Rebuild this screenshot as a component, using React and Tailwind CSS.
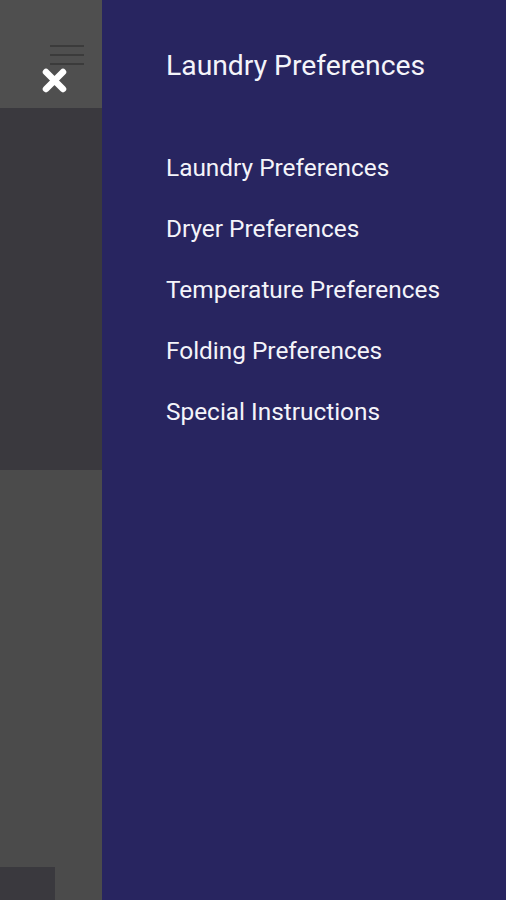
const items = [
  "Laundry Preferences",
  "Dryer Preferences",
  "Temperature Preferences",
  "Folding Preferences",
  "Special Instructions",
];

export default function App() {
  return (
    <div className="flex h-[900px] w-[506px] overflow-hidden" style={{ fontFamily: "Roboto, 'Noto Sans', sans-serif" }}>
      {/* Dimmed page behind the drawer */}
      <div className="relative flex w-[102px] shrink-0 flex-col bg-[#4b4b4b]">
        <div className="relative h-[108px] bg-[#4f4f4f]">
          {/* hamburger */}
          <div className="absolute left-[50px] top-[45px] flex w-[34px] flex-col gap-[7px]">
            <span className="h-[2px] bg-[#3b3b3b]" />
            <span className="h-[2px] bg-[#3b3b3b]" />
            <span className="h-[2px] bg-[#3b3b3b]" />
          </div>
          {/* close */}
          <svg className="absolute left-[41px] top-[67px]" width="27" height="27" viewBox="0 0 27 27">
            <path d="M5 5 L22 22 M22 5 L5 22" stroke="#ffffff" strokeWidth="6.5" strokeLinecap="round" />
          </svg>
        </div>
        <div className="h-[362px] bg-[#3a393e]" />
        <div className="flex-1" />
        <div className="h-[33px] w-[55px] bg-[#3a393e]" />
      </div>

      {/* Drawer */}
      <div className="flex-1 bg-[#282560] pl-[64px] pt-[50px] text-[#f4f4fa]">
        <h1 className="text-[28.3px] leading-[32px]">Laundry Preferences</h1>
        <ul className="mt-[72px] flex flex-col gap-[33px]">
          {items.map((item) => (
            <li key={item} className="text-[24.4px] leading-[28px]">
              {item}
            </li>
          ))}
        </ul>
      </div>
    </div>
  );
}
